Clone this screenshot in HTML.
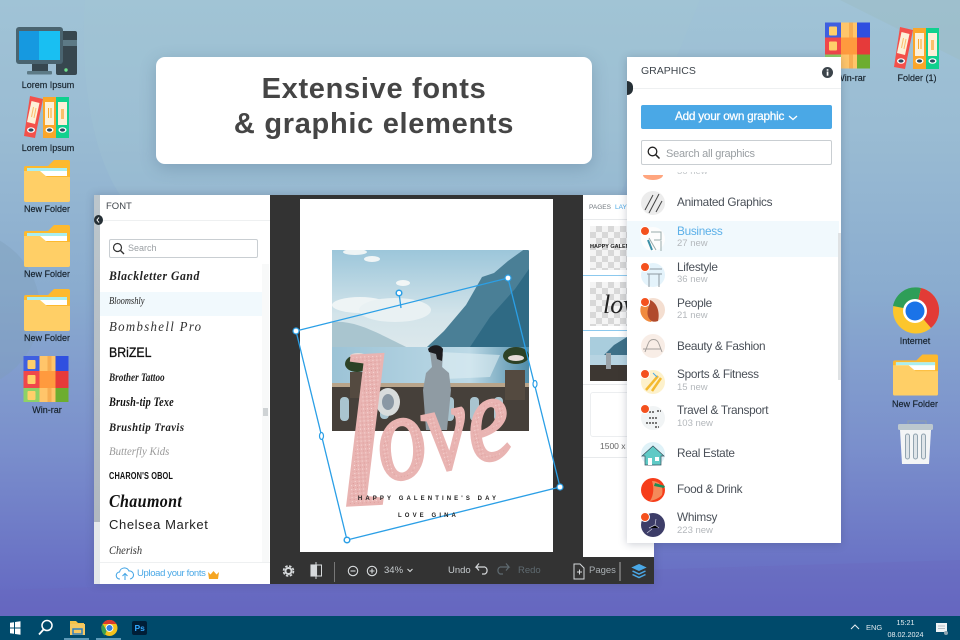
<!DOCTYPE html>
<html><head><meta charset="utf-8"><style>
html,body{margin:0;padding:0;width:960px;height:640px;overflow:hidden;font-family:"Liberation Sans",sans-serif}
#r{position:relative;width:960px;height:640px;overflow:hidden;background:linear-gradient(180deg,#a0c3d6 0%,#9abcd3 20%,#8aaccf 45%,#7a8fcc 70%,#6468c2 95%)}
.a{position:absolute}
.t{position:absolute;white-space:nowrap}
.l{position:absolute;width:90px;text-align:center;font-size:9px;line-height:11px;color:#15202a;white-space:nowrap;-webkit-text-stroke:.15px #15202a}
.g{position:absolute;left:677px;font-size:11.8px;line-height:14px;letter-spacing:-.3px;color:#4a5058;white-space:nowrap}
.s{position:absolute;left:677px;font-size:9.5px;line-height:12px;color:#b4b8bc;white-space:nowrap}
.f{position:absolute;left:109px;white-space:nowrap;color:#111;font-family:"Liberation Serif",serif;font-style:italic;transform-origin:0 50%}
svg{position:absolute;overflow:visible}
.tb{font-size:9.5px;line-height:12px;color:#c6cbce}
</style></head><body><div id="r">
<svg width="960" height="640" style="left:0;top:0">
<defs>
<symbol id="folder" viewBox="0 0 46 42"><path d="M2 6h22l6-6h14a2 2 0 0 1 2 2v38a2 2 0 0 1-2 2H2a2 2 0 0 1-2-2V8a2 2 0 0 1 2-2z" fill="#fdb92e"/><rect x="3" y="8" width="40" height="8" fill="#fff"/><rect x="3" y="8" width="40" height="3" fill="#a9eef0"/><path d="M0 11h16l7 6h23v23a2 2 0 0 1-2 2H2a2 2 0 0 1-2-2z" fill="#ffcf66"/></symbol>
<symbol id="bind" viewBox="0 0 46 42"><path d="M6 0l13 3-8 39-11-2z" fill="#f4504a"/><path d="M7.500 5l8 2-4.500 21-8-2z" fill="#fdf0d8"/><path d="M9.500 11l-2 10M12 12l-2 10" stroke="#fbbf6a"/><ellipse cx="7" cy="34" rx="4" ry="2.800" fill="#fff"/><ellipse cx="7" cy="34" rx="2.600" ry="1.600" fill="#2c4a60"/><rect x="19" y="1" width="13" height="41" fill="#fba62a"/><rect x="21" y="6" width="9" height="23" fill="#fdf0d8"/><rect x="24" y="12" width="1" height="10" fill="#fba62a"/><rect x="26.500" y="12" width="1" height="10" fill="#fba62a"/><ellipse cx="25.500" cy="34" rx="4" ry="2.800" fill="#fff"/><ellipse cx="25.500" cy="34" rx="2.600" ry="1.600" fill="#2c4a60"/><rect x="32" y="1" width="13" height="41" fill="#0fd18e"/><rect x="34" y="6" width="9" height="23" fill="#fdf0d8"/><rect x="37" y="13" width="3" height="10" fill="#fbbf6a"/><ellipse cx="38.500" cy="34" rx="4" ry="2.800" fill="#fff"/><ellipse cx="38.500" cy="34" rx="2.600" ry="1.600" fill="#2c4a60"/></symbol>
<symbol id="rar" viewBox="0 0 45 46"><rect width="16" height="15" fill="#3f5fe0"/><rect y="15" width="16" height="17" fill="#f0474a"/><rect y="32" width="16" height="14" fill="#8ed166"/><rect x="16" width="16" height="46" fill="#ffc56a"/><rect x="24" width="4" height="46" fill="#f6ad52"/><rect x="16" y="15" width="16" height="17" fill="#ff9a3e"/><rect x="32" width="13" height="15" fill="#2f4fe0"/><rect x="32" y="15" width="13" height="17" fill="#e63a3a"/><rect x="32" y="32" width="13" height="14" fill="#6dad2f"/><rect x="4" y="4" width="8" height="9" rx="1" fill="#ffcf6a"/><rect x="4" y="19" width="8" height="9" rx="1" fill="#ffcf6a"/><rect x="4" y="35" width="8" height="9" rx="1" fill="#ffcf6a"/></symbol>
</defs>
<circle cx="-40" cy="310" r="80" fill="#7f9fb8" opacity=".35"/>
<path d="M85 0C80 70 90 150 120 195H620L700 0z" fill="#a3c6d4" opacity=".25"/>
<path d="M840 0L960 0V60z" fill="#9dbdc6" opacity=".6"/>
<path d="M0 590L960 560V616H0z" fill="#6a66bc" opacity=".35"/>

<!-- desktop icons -->
<g>
<rect x="56" y="31" width="21" height="44" rx="2" fill="#37474f"/><rect x="63" y="40" width="14" height="6" fill="#5d7a86"/><circle cx="66" cy="70" r="1.700" fill="#6fe08c"/>
<rect x="16" y="27" width="47" height="37" rx="3" fill="#4a6470"/><rect x="19" y="31" width="20" height="29" fill="#1699e0"/><rect x="39" y="31" width="21" height="29" fill="#19bff2"/>
<rect x="32" y="64" width="16" height="7" fill="#37474f"/><rect x="27" y="71" width="25" height="3.500" rx="1" fill="#5d7a86"/>
</g>
<use href="#bind" x="24" y="96" width="46" height="42"/>
<use href="#folder" x="24" y="160" width="46" height="42"/>
<use href="#folder" x="24" y="225" width="46" height="42"/>
<use href="#folder" x="24" y="289" width="46" height="42"/>
<use href="#rar" x="23.500" y="356" width="45" height="46"/>
<use href="#rar" x="825" y="22" width="45" height="47"/>
<use href="#bind" x="894" y="27" width="46" height="42"/>
<use href="#folder" x="893" y="354" width="45" height="42"/>
<g>
<circle cx="916" cy="310.500" r="23" fill="#fcc62c"/>
<path d="M916 310.500L893 306A23 23 0 0 1 921 288z" fill="#2e9e58"/>
<path d="M916 310.500L921 288A23 23 0 0 1 931 328z" fill="#e23b36"/>
<circle cx="915" cy="311" r="12" fill="#fff"/><circle cx="915" cy="311" r="9.500" fill="#1a73e8"/>
</g>
<g>
<path d="M908 424v-3h18v3" fill="none" stroke="#8fa0ac" stroke-width="1"/>
<rect x="898" y="424" width="35" height="6" rx="1.500" fill="#bcc8ce"/>
<path d="M900 430h31l-2 34h-27z" fill="#f3f5f6"/>
<g fill="#dfe5e9" stroke="#92a4b0"><rect x="905.500" y="434" width="4" height="25" rx="2"/><rect x="913.500" y="434" width="4" height="25" rx="2"/><rect x="921.500" y="434" width="4" height="25" rx="2"/></g>
</g>
</svg>
<div class="l" style="left:3px;top:80px">Lorem Ipsum</div>
<div class="l" style="left:3px;top:143px">Lorem Ipsum</div>
<div class="l" style="left:2px;top:204px">New Folder</div>
<div class="l" style="left:2px;top:269px">New Folder</div>
<div class="l" style="left:2px;top:333px">New Folder</div>
<div class="l" style="left:2px;top:405px">Win-rar</div>
<div class="l" style="left:806px;top:73px">Win-rar</div>
<div class="l" style="left:879px;top:73px;width:76px">Folder (1)</div>
<div class="l" style="left:870px;top:336px">Internet</div>
<div class="l" style="left:870px;top:399px">New Folder</div>

<!-- title card -->
<div class="a" style="left:156px;top:57px;width:436px;height:107px;background:#fff;border-radius:9px;box-shadow:0 4px 16px rgba(60,90,120,.28)"></div>
<div class="t" style="left:156px;width:436px;top:72px;text-align:center;font-weight:700;font-size:29px;line-height:35px;letter-spacing:.7px;color:#454545">Extensive fonts<br>&amp; graphic elements</div>

<!-- editor -->
<div class="a" style="left:94px;top:195px;width:560px;height:389px;background:#fff;box-shadow:0 0 8px rgba(50,60,90,.25)"></div>
<div class="a" style="left:94px;top:195px;width:6px;height:389px;background:linear-gradient(#bcc6cc 0,#b0b8c0 84%,#e4e8ea 84%)"></div>
<div class="a" style="left:270px;top:195px;width:313px;height:389px;background:#333"></div>
<div class="a" style="left:583px;top:195px;width:71px;height:389px;background:#fff"></div>
<div class="a" style="left:270px;top:557px;width:384px;height:27px;background:#333"></div>

<!-- font panel -->
<div class="t" style="left:106px;top:201px;font-size:9.500px;line-height:12px;color:#40464c">FONT</div>
<div class="a" style="left:100px;top:220px;width:170px;height:1px;background:#eef0f1"></div>
<div class="a" style="left:94px;top:215px;width:9px;height:10px;border-radius:50%;background:#263036"></div>
<svg width="4" height="6" style="left:96px;top:217px"><path d="M3 .5L1 3l2 2.500" fill="none" stroke="#fff" stroke-width="1"/></svg>
<div class="a" style="left:109px;top:239px;width:147px;height:17px;border:1px solid #c9ced2;border-radius:2px"></div>
<svg width="14" height="14" style="left:112px;top:242px"><circle cx="5.500" cy="5.500" r="4" fill="none" stroke="#333" stroke-width="1.200"/><path d="M8.500 8.500L12 12" stroke="#333" stroke-width="1.400"/></svg>
<div class="t" style="left:128px;top:242px;font-size:9px;line-height:12px;color:#9ba0a4">Search</div>
<div class="a" style="left:262px;top:264px;width:7px;height:298px;background:#f8f9f9"></div>
<div class="a" style="left:263px;top:408px;width:5px;height:8px;background:#cfd3d5"></div>
<div class="a" style="left:100px;top:292px;width:162px;height:24px;background:#f1f9fd"></div>
<div class="f" style="top:268px;font-size:13px;line-height:16px;font-weight:700;letter-spacing:.6px;color:#222;transform:scaleX(.9)">Blackletter Gand</div>
<div class="f" style="top:295px;font-size:10.500px;line-height:14px;color:#222;transform:scaleX(.8)">Bloomshly</div>
<div class="f" style="top:319px;font-size:13.500px;line-height:16px;letter-spacing:1.400px;color:#333;transform:scaleX(.95)">Bombshell Pro</div>
<div class="f" style="top:344px;font-style:normal;font-family:'Liberation Sans',sans-serif;font-size:14px;line-height:17px;transform:scaleX(.88);-webkit-text-stroke:.3px #111">BRiZEL</div>
<div class="f" style="top:371px;font-size:11.500px;line-height:14px;font-weight:700;color:#222;transform:scaleX(.8)">Brother Tattoo</div>
<div class="f" style="top:395px;font-size:12.500px;line-height:15px;font-weight:700;letter-spacing:.2px;transform:scaleX(.82)">Brush-tip Texe</div>
<div class="f" style="top:420px;font-size:12px;line-height:15px;font-weight:700;letter-spacing:.5px;color:#222;transform:scaleX(.89)">Brushtip Travis</div>
<div class="f" style="top:444px;font-size:12px;line-height:15px;color:#999;transform:scaleX(.9)">Butterfly Kids</div>
<div class="f" style="top:469px;font-style:normal;font-family:'Liberation Sans',sans-serif;font-weight:700;font-size:10.500px;line-height:14px;letter-spacing:.2px;transform:scaleX(.7)">CHARON'S OBOL</div>
<div class="f" style="top:491px;font-size:18px;line-height:21px;font-weight:700;letter-spacing:.4px;transform:scaleX(.89)">Chaumont</div>
<div class="f" style="top:517px;font-style:normal;font-family:'Liberation Sans',sans-serif;font-size:13px;line-height:16px;letter-spacing:.6px;color:#222">Chelsea Market</div>
<div class="f" style="top:543px;font-size:12px;line-height:15px;color:#333;transform:scaleX(.87)">Cherish</div>
<div class="a" style="left:100px;top:562px;width:170px;height:1px;background:#eef0f1"></div>
<svg width="18" height="14" style="left:116px;top:567px"><path d="M4 12a3.500 3.500 0 0 1-.5-7A5 5 0 0 1 13 4a4 4 0 0 1 1 8M9 13V7M6.500 9L9 6.500 11.500 9" fill="none" stroke="#4aa8e6" stroke-width="1.100"/></svg>
<div class="t" style="left:137px;top:568px;font-size:9.500px;line-height:12px;letter-spacing:-.35px;color:#4aa8e6">Upload your fonts</div>
<svg width="11" height="9" style="left:208px;top:571px"><path d="M0 1l2.500 2.500L5.500 0l3 3.500L11 1l-1 7H1z" fill="#f5a623"/></svg>

<!-- page -->
<div class="a" style="left:300px;top:199px;width:253px;height:353px;background:#fff"></div>
<svg width="960" height="640" style="left:0;top:0">
<defs>
<linearGradient id="sky" x1="0" y1="0" x2="0" y2="1"><stop offset="0" stop-color="#9cc6da"/><stop offset=".6" stop-color="#d3e4ea"/><stop offset="1" stop-color="#dfe9ec"/></linearGradient>
<linearGradient id="sea" x1="0" y1="0" x2="1" y2="0"><stop offset="0" stop-color="#9cc3d6"/><stop offset=".7" stop-color="#bcd9e6"/><stop offset="1" stop-color="#4f8ca8"/></linearGradient>
<clipPath id="ph"><rect x="332" y="250" width="197" height="181"/></clipPath>
<pattern id="gl" width="4" height="4" patternUnits="userSpaceOnUse"><rect width="4" height="4" fill="#e9b4b2"/><rect width="1" height="1" fill="#f8dcda"/><rect x="2" y="2" width="1" height="1" fill="#dc9c9a"/></pattern>
</defs>
<g clip-path="url(#ph)">
<rect x="332" y="250" width="197" height="108" fill="url(#sky)"/>
<ellipse cx="360" cy="305" rx="28" ry="8" fill="#eef4f5"/><ellipse cx="395" cy="310" rx="36" ry="12" fill="#e9f1f3"/><ellipse cx="355" cy="252" rx="12" ry="3" fill="#eef4f5"/><ellipse cx="372" cy="259" rx="8" ry="3" fill="#f0f5f6"/><ellipse cx="403" cy="283" rx="7" ry="3" fill="#f2f6f6"/>
<path d="M332 322c20-2 40 8 60 18s30 14 34 18H332z" fill="#a9c5cf"/>
<path d="M427 347l17-16 22-26 16-28 12-4 14-12 18-13 3 3v107H427z" fill="#4a7f96"/>
<path d="M470 347l20-30 25-28 14-20v89h-60z" fill="#2f6a84"/>
<rect x="332" y="347" width="197" height="38" fill="url(#sea)"/>
<path d="M440 352l60 3-10 22-45 2z" fill="#e0eef4" opacity=".6"/>
<rect x="332" y="385" width="197" height="46" fill="#46403a"/>
<rect x="332" y="383" width="197" height="4" fill="#b8a48a"/>
<g fill="#a9c4cf"><rect x="380" y="397" width="9" height="22" rx="4"/><rect x="445" y="397" width="9" height="24" rx="4"/><rect x="470" y="397" width="9" height="24" rx="4"/><rect x="494" y="397" width="9" height="24" rx="4"/><rect x="340" y="397" width="9" height="24" rx="4"/></g>
<path d="M430 352c5-5 12-3 13 3l-1 12 7 6 2 17-4 40h-21l-3-40 3-17 6-6z" fill="#8f9ba3"/><path d="M428 349c4-5 12-5 15 0l-1 12-5-2-1-5-7-2z" fill="#1c1c20"/>
<path d="M345 364a12 9 0 1 1 24 0a12 8 0 1 1-24 0z" fill="#2d4226"/><path d="M503 356a13 9 0 1 1 26 0 13 8 0 1 1-26 0z" fill="#2d4226"/>
<ellipse cx="358" cy="356" rx="8" ry="3" fill="#e6dcd8"/><ellipse cx="516" cy="358" rx="8" ry="3" fill="#e6dcd8"/>
<rect x="350" y="372" width="18" height="26" fill="#544a40"/><rect x="505" y="370" width="20" height="30" fill="#544a40"/>
<ellipse cx="388" cy="402" rx="12" ry="14" fill="#d8dcdc"/><ellipse cx="388" cy="402" rx="6" ry="8" fill="#8a98a4"/>
</g>
<text transform="translate(336 506) rotate(-3)" font-family="Liberation Serif,serif" font-style="italic" font-size="215" fill="url(#gl)" stroke="#e9b4b2" stroke-width="2.500">l</text>
<text transform="translate(384 482) rotate(-12) scale(.8 1)" font-family="Liberation Serif,serif" font-style="italic" font-size="122" fill="url(#gl)" stroke="#e9b4b2" stroke-width="3.500">ove</text>
<polygon points="296,331 508,278 560,487 347,540" fill="none" stroke="#2b9fe6" stroke-width="1.300"/>
<path d="M399 293l2 15" stroke="#2b9fe6" stroke-width="1.300"/>
<g fill="#fff" stroke="#2b9fe6" stroke-width="1.500"><circle cx="399" cy="293" r="2.800"/><circle cx="347" cy="540" r="2.800"/></g>
<g fill="#fff" stroke="#2b9fe6" stroke-width="1.200"><circle cx="296" cy="331" r="3"/><circle cx="508" cy="278" r="3"/><circle cx="560" cy="487" r="3"/><ellipse cx="321.500" cy="436" rx="2" ry="3.500"/><ellipse cx="535" cy="384" rx="2" ry="3.500"/></g>
</svg>
<div class="t" style="left:302px;width:253px;text-align:center;top:495px;font-size:6px;line-height:8px;letter-spacing:3.100px;font-weight:700;color:#222">HAPPY GALENTINE'S DAY</div>
<div class="t" style="left:302px;width:253px;text-align:center;top:512px;font-size:6px;line-height:8px;letter-spacing:3.100px;font-weight:700;color:#222">LOVE GINA</div>

<!-- right layers panel -->
<div class="t" style="left:589px;top:203px;font-size:6.500px;line-height:9px;color:#70777d">PAGES</div>
<div class="t" style="left:615px;top:203px;font-size:6.500px;line-height:9px;color:#4aa8e6">LAY</div>
<div class="a" style="left:583px;top:219px;width:44px;height:1px;background:#e8eaec"></div>
<div class="a" style="left:590px;top:226px;width:37px;height:44px;background:repeating-conic-gradient(#d8d8d8 0 25%,#f4f4f4 0 50%) 0 0/12px 12px"></div>
<div class="t" style="left:590px;top:243px;font-size:5.500px;line-height:8px;font-weight:700;color:#222;width:37px;overflow:hidden">HAPPY GALENTINE</div>
<div class="a" style="left:583px;top:275px;width:44px;height:1px;background:#8cc9ee"></div>
<div class="a" style="left:590px;top:282px;width:37px;height:44px;background:repeating-conic-gradient(#d8d8d8 0 25%,#f4f4f4 0 50%) 0 0/12px 12px"></div>
<div class="t" style="left:603px;top:290px;font-size:26px;line-height:30px;font-family:'Liberation Serif',serif;font-style:italic;color:#222;width:24px;overflow:hidden">lov</div>
<div class="a" style="left:583px;top:330px;width:44px;height:1px;background:#8cc9ee"></div>
<svg width="37" height="44" style="left:590px;top:337px"><rect width="37" height="20" fill="#a9cddd"/><path d="M12 20l12-12 13-8v20z" fill="#3d7088"/><rect y="18" width="37" height="10" fill="#b7d4e2"/><rect y="28" width="37" height="16" fill="#3d3732"/><rect x="16" y="16" width="5" height="16" fill="#9aa2a8"/></svg>
<div class="a" style="left:583px;top:384px;width:44px;height:1px;background:#e8eaec"></div>
<div class="a" style="left:590px;top:392px;width:40px;height:43px;border:1px solid #eceef0;border-radius:3px"></div>
<div class="t" style="left:600px;top:441px;font-size:8.500px;line-height:11px;color:#666">1500 x 2100</div>
<div class="a" style="left:583px;top:457px;width:44px;height:1px;background:#e8eaec"></div>

<!-- toolbar -->
<svg width="384" height="27" style="left:270px;top:557px" fill="none" stroke="#d6d9db">
<circle cx="18.500" cy="14" r="3" stroke-width="2"/><circle cx="18.500" cy="14" r="5" stroke-width="1.600" stroke-dasharray="2.500 1.500"/>
<rect x="41" y="8" width="5.500" height="11" stroke-width="1.100" fill="#d6d9db"/><rect x="46.500" y="8" width="5" height="11" stroke-width="1"/><path d="M46 5v17" stroke-width="1"/>
<path d="M64.500 5v20" stroke="#777"/>
<circle cx="83" cy="14" r="4.700" stroke-width="1.100"/><path d="M80.500 14h5" stroke-width="1.100"/>
<circle cx="102" cy="14" r="4.700" stroke-width="1.100"/><path d="M99.500 14h5M102 11.500v5" stroke-width="1.100"/>
<path d="M137.500 12l2.500 2.500 2.500-2.500" stroke-width="1.100"/>
<path d="M215 10h-9l3-3.500M206 10l3 3.500M215 10a4 4 0 0 1 0 7h-3" stroke-width="1.200"/>
<path d="M230 10h9l-3-3.500M239 10l-3 3.500M230 10a4 4 0 0 0 0 7h3" stroke="#5f6a70" stroke-width="1.200"/>
<path d="M304 7h6l4 4v11h-10zM307 15h5M309.500 12.500v5" stroke-width="1"/>
<path d="M350 5v19" stroke="#aaa"/>
<path d="M369 7.500l6.500 3-6.500 3-6.500-3z" fill="#4aa8e6" stroke="#4aa8e6"/><path d="M362.500 14l6.500 3 6.500-3M362.500 17.500l6.500 3 6.500-3" stroke="#4aa8e6" stroke-width="1.500"/>
</svg>
<div class="t tb" style="left:384px;top:565px">34%</div>
<div class="t tb" style="left:448px;top:565px">Undo</div>
<div class="t tb" style="left:518px;top:565px;color:#5f6a70">Redo</div>
<div class="t tb" style="left:589px;top:565px;color:#aab0b4">Pages</div>

<!-- graphics panel -->
<div class="a" style="left:627px;top:57px;width:214px;height:486px;background:#fff;box-shadow:0 1px 8px rgba(40,50,80,.25)"></div>
<div class="t" style="left:641px;top:65px;font-size:10.500px;line-height:13px;color:#3e454c">GRAPHICS</div>
<div class="a" style="left:627px;top:88px;width:214px;height:1px;background:#eef0f1"></div>
<div class="a" style="left:627px;top:81px;width:6px;height:14px;border-radius:0 7px 7px 0;background:#263036"></div>
<svg width="11" height="11" style="left:822px;top:67px"><circle cx="5.500" cy="5.500" r="5.500" fill="#3c444b"/><rect x="4.700" y="4.500" width="1.700" height="4.200" fill="#fff"/><rect x="4.700" y="2.200" width="1.700" height="1.500" fill="#fff"/></svg>
<div class="a" style="left:641px;top:105px;width:191px;height:24px;background:#4aa8e6;border-radius:2px"></div>
<div class="t" style="left:675px;top:109px;font-size:11.800px;line-height:15px;color:#fff;letter-spacing:-.25px;-webkit-text-stroke:.25px #fff">Add your own graphic</div>
<svg width="10" height="6" style="left:788px;top:115px"><path d="M1 1l4 3.500L9 1" fill="none" stroke="#fff" stroke-width="1.300"/></svg>
<div class="a" style="left:641px;top:140px;width:189px;height:23px;border:1px solid #c9ced2;border-radius:2px"></div>
<svg width="14" height="14" style="left:647px;top:146px"><circle cx="5.500" cy="5.500" r="4.300" fill="none" stroke="#222" stroke-width="1.300"/><path d="M8.700 8.700L12.500 12.500" stroke="#222" stroke-width="1.500"/></svg>
<div class="t" style="left:666px;top:147px;font-size:11px;line-height:14px;letter-spacing:-.25px;color:#9a9fa3">Search all graphics</div>
<div class="a" style="left:627px;top:221px;width:212px;height:36px;background:#f1f9fd"></div>
<div class="a" style="left:838px;top:233px;width:3px;height:147px;background:#dfe2e4"></div>
<div class="a" style="left:677px;top:172px;width:40px;height:5px;overflow:hidden"><div style="margin-top:-6px;font-size:9.500px;line-height:12px;color:#c4c8cb;white-space:nowrap">36 new</div></div>

<svg width="960" height="640" style="left:0;top:0">
<path d="M643 175h20a10 5 0 0 1-20 0z" fill="#ffa57e"/>
<circle cx="653" cy="203" r="12" fill="#ececec"/><path d="M645 210l8-15M649 213l10-19M656 212l6-11" stroke="#444" stroke-width="1"/>
<circle cx="653" cy="239" r="12" fill="#fdfdfd"/><path d="M651 232h10v8h-7M661 241v10M649 238l7 12" stroke="#9aa" fill="none"/><path d="M648 240l4 10" stroke="#3b8fa6" stroke-width="2"/>
<circle cx="653" cy="275" r="12" fill="#e4f3fb"/><path d="M648 269h14M647 274h15M649 274v13M659 274v13" stroke="#8e9aa2" fill="none"/>
<circle cx="653" cy="310" r="12" fill="#f4ded0"/><path d="M641 306a12 12 0 0 0 10 16c4-6 2-12-3-16z" fill="#f08a3e"/><path d="M650 300c8 3 10 14 8 21-8 3-12-5-10-12z" fill="#b04a2c"/>
<circle cx="653" cy="346" r="12" fill="#f8ede6"/><path d="M645 352l3-8c2-6 9-6 11 0l3 8M643 349h18" stroke="#a5a09c" fill="none"/>
<circle cx="653" cy="382" r="12" fill="#fdf1cb"/><path d="M646 390l12-14M652 391l9-13" stroke="#f4ba30" stroke-width="2.500"/><path d="M653 373l4 4" stroke="#4aa8e6"/>
<circle cx="653" cy="418" r="12" fill="#f1f4f5"/><path d="M646 412h8M649 418h9M646 423h12M655 427h4M657 411h4" stroke="#777" stroke-width="2" stroke-dasharray="2 1"/>
<circle cx="653" cy="454" r="12" fill="#dff2f8"/><path d="M642 456l11-10 11 10h-3v9h-16v-9z" fill="#5fcac6" stroke="#39505c" stroke-width=".7"/><rect x="648" y="458" width="4" height="7" fill="#fff"/><rect x="655" y="457" width="4" height="4" fill="#fff"/>
<circle cx="653" cy="490" r="12" fill="#f63d1a"/><path d="M652 481c8 0 12 6 10 14-4 4-8 5-12 6 4-6 4-14 2-20z" fill="#f48a5a"/><path d="M655 483l10 3-1 2-10-2z" fill="#1c8d58"/>
<circle cx="653" cy="525" r="12" fill="#3d3d68"/><path d="M649 528l6-3 4 3M655 525l1-6M647 533l5-4" stroke="#cfd0e0" stroke-width=".7"/>
<g fill="#f4511e" stroke="#fff" stroke-width="1"><circle cx="645" cy="231" r="4.500"/><circle cx="645" cy="267" r="4.500"/><circle cx="645" cy="302" r="4.500"/><circle cx="645" cy="374" r="4.500"/><circle cx="645" cy="409" r="4.500"/><circle cx="645" cy="517" r="4.500"/></g>
</svg>
<div class="g" style="top:195px">Animated Graphics</div>
<div class="g" style="top:224px;color:#5cb0e8">Business</div><div class="s" style="top:238px">27 new</div>
<div class="g" style="top:260px">Lifestyle</div><div class="s" style="top:274px">36 new</div>
<div class="g" style="top:296px">People</div><div class="s" style="top:310px">21 new</div>
<div class="g" style="top:339px">Beauty &amp; Fashion</div>
<div class="g" style="top:367px">Sports &amp; Fitness</div><div class="s" style="top:382px">15 new</div>
<div class="g" style="top:403px">Travel &amp; Transport</div><div class="s" style="top:418px">103 new</div>
<div class="g" style="top:446px">Real Estate</div>
<div class="g" style="top:482px">Food &amp; Drink</div>
<div class="g" style="top:510px">Whimsy</div><div class="s" style="top:525px">223 new</div>

<!-- taskbar -->
<div class="a" style="left:0;top:616px;width:960px;height:24px;background:#004a6b"></div>
<svg width="960" height="24" style="left:0;top:616px">
<path d="M10 6.800l4-.6v5.300h-4zM15 6l5.500-.8v6.300H15zM10 12.500h4v5.300l-4-.6zM15 12.500h5.500v6.300L15 18z" fill="#fff"/>
<circle cx="47" cy="9.500" r="5" fill="none" stroke="#fff" stroke-width="1.500"/><path d="M43.500 13.500L39 18.500" stroke="#fff" stroke-width="1.800"/>
<path d="M70 5h6l2 2h6v3H70z" fill="#f5c24a"/><rect x="70" y="8" width="15" height="11" fill="#f5c862"/><rect x="73" y="13" width="9" height="5" fill="none" stroke="#2f80c2" stroke-width="1.500"/>
<circle cx="109.500" cy="12" r="8" fill="#f3c21c"/><path d="M102.500 8a8 8 0 0 1 14 0h-7z" fill="#db3a2e"/><path d="M101.700 12a8 8 0 0 1 1-4l4 6.500 -2 5a8 8 0 0 1-3-7.500z" fill="#3aa050"/>
<circle cx="109.500" cy="12" r="3.900" fill="#fff"/><circle cx="109.500" cy="12" r="3" fill="#2f7fe0"/>
<rect x="132" y="5" width="15" height="14" rx="2" fill="#001e36"/>
<text x="134.500" y="15" font-size="8.500" font-weight="700" fill="#31a8ff" font-family="Liberation Sans,sans-serif">Ps</text>
<rect x="64" y="22" width="25" height="2" fill="#5d9ab8"/><rect x="96" y="22" width="25" height="2" fill="#5d9ab8"/>
<path d="M851 13l4-4 4 4" fill="none" stroke="#e6eef2" stroke-width="1"/>
<path d="M936 7h11v9h-11z" fill="#eef3f5"/><path d="M938 10h7M938 12.500h7" stroke="#a3b0b8" stroke-width=".7"/><circle cx="946" cy="17" r="2" fill="#8ca4b0"/>
</svg>
<div class="t" style="left:866px;top:623px;font-size:7.500px;line-height:10px;color:#dbe5ea">ENG</div>
<div class="t" style="left:885.500px;width:40px;text-align:center;top:617px;font-size:7.200px;line-height:12px;color:#e6eef2">15:21<br>08.02.2024</div>
</div></body></html>
